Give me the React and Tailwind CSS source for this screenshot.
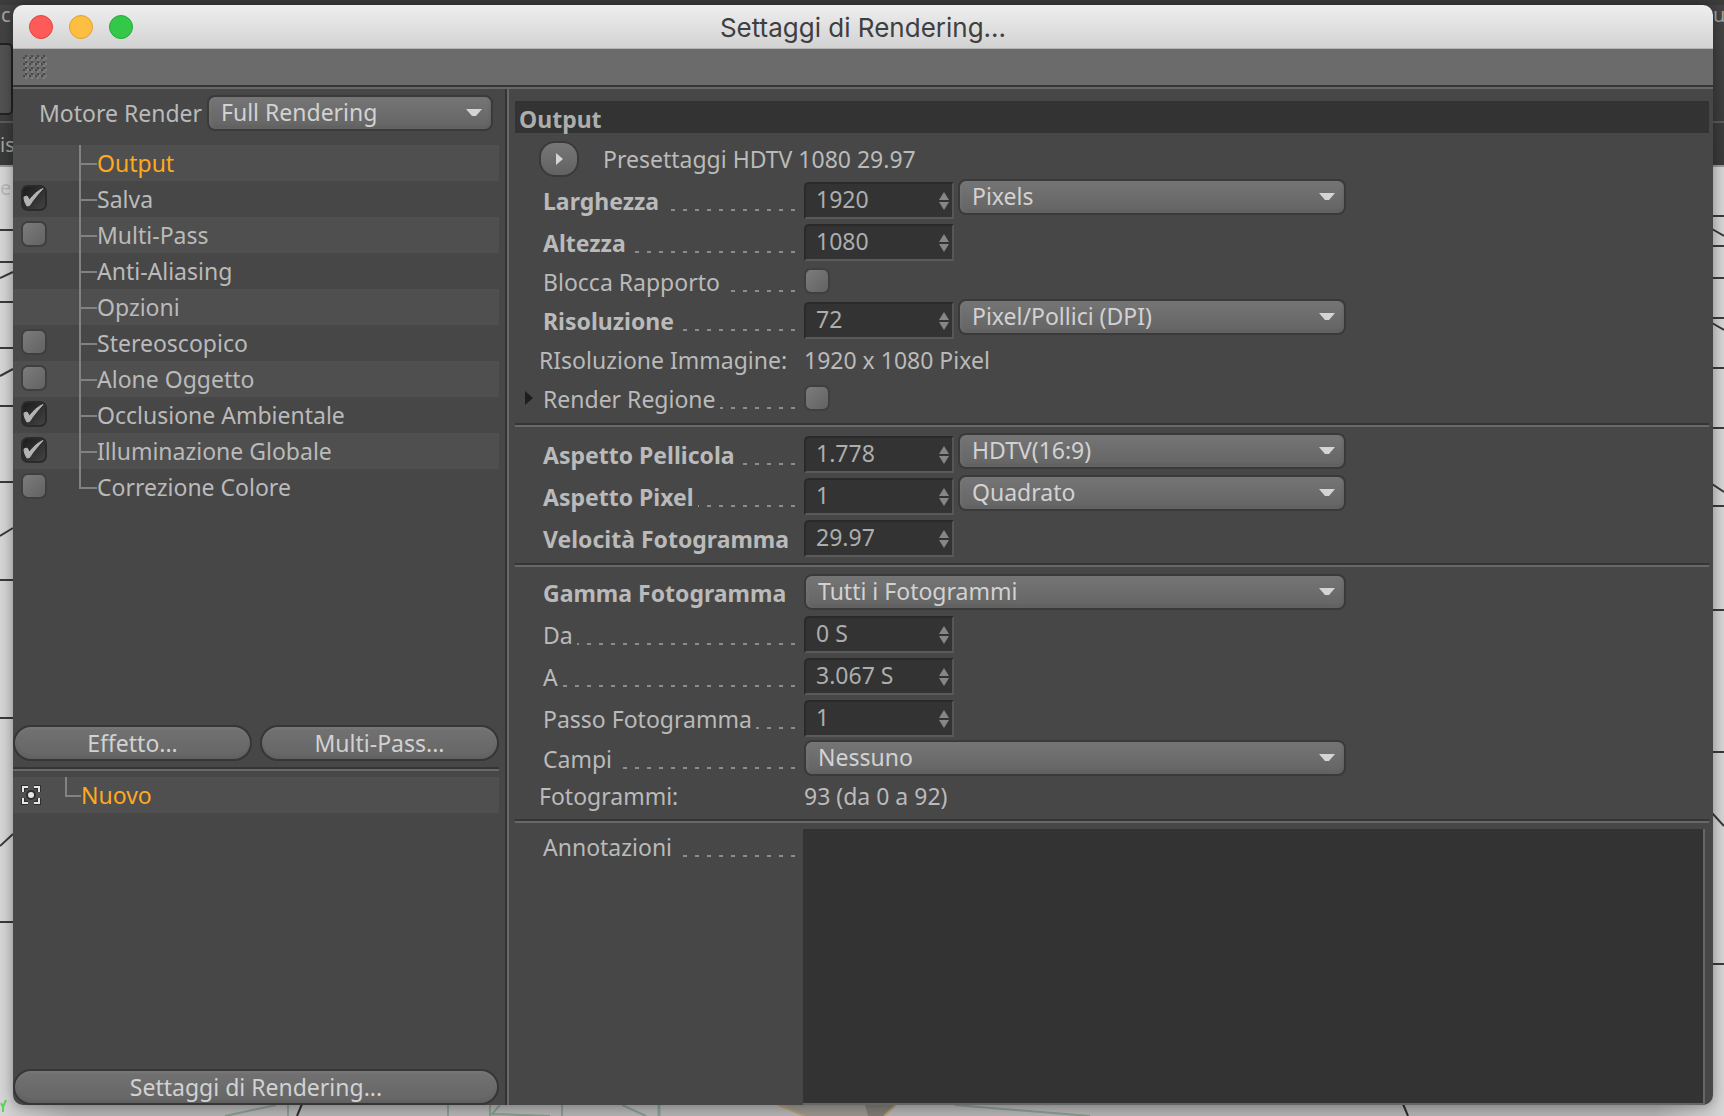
import React, { useState } from 'react';

const effects = [
  { name: 'Output', checkable: false },
  { name: 'Salva', checkable: true, on: true },
  { name: 'Multi-Pass', checkable: true, on: false },
  { name: 'Anti-Aliasing', checkable: false },
  { name: 'Opzioni', checkable: false },
  { name: 'Stereoscopico', checkable: true, on: false },
  { name: 'Alone Oggetto', checkable: true, on: false },
  { name: 'Occlusione Ambientale', checkable: true, on: true },
  { name: 'Illuminazione Globale', checkable: true, on: true },
  { name: 'Correzione Colore', checkable: true, on: false },
];

// 3D viewport and toolbars that stay visible behind the dialog
const Backdrop = () => (
  <svg className="absolute inset-0 w-full h-full" aria-hidden="true">
    <defs>
      <linearGradient id="bar" x1="0" y1="0" x2="0" y2="1">
        <stop offset="0" stopColor="#454545" />
        <stop offset="1" stopColor="#3a3a3a" />
      </linearGradient>
      <linearGradient id="floor" x1="0" y1="0" x2="1" y2="0">
        <stop offset="0" stopColor="#b0b0b0" stopOpacity="0" />
        <stop offset="0.04" stopColor="#b0b0b0" />
        <stop offset="0.96" stopColor="#b0b0b0" />
        <stop offset="1" stopColor="#b0b0b0" stopOpacity="0" />
      </linearGradient>
    </defs>
    <rect width="100%" height="100%" fill="#d6d6d6" />
    <rect width="100%" height="165" fill="url(#bar)" />
    <rect width="100%" height="5" fill="#3c3c3c" />
    <rect x="-20" y="44" width="32" height="70" rx="4" fill="#525252" stroke="#222" strokeWidth="2" />
    <rect y="121" width="100%" height="2" fill="#5c5c5c" />
    <rect y="165" width="100%" height="2" fill="#9a9a9a" />
    <text x="1" y="22" fontSize="20" fontFamily="Noto Sans" fill="#a6a6a6">c</text>
    <text x="0" y="152" fontSize="20" fontFamily="Noto Sans" fill="#a6a6a6">is</text>
    <text x="0" y="195" fontSize="20" fontFamily="Noto Sans" fill="#b8b8b8">e</text>
    <text x="1713" y="22" fontSize="20" fontFamily="Noto Sans" fill="#a6a6a6">u</text>
    <g stroke="#3a3a3a" strokeWidth="2" fill="none">
      <path d="M0 230H13M0 262H13M0 278L13 272M0 302H13M0 348H13M0 376L13 369M0 406H13M0 482H13M0 536L13 528M0 580H13M0 718H13M0 846L13 834M0 922H13" />
      <path d="M1712 216H1724M1712 229L1724 236M1712 246H1724M1712 278H1724M1712 318H1724M1712 323L1724 330M1712 368H1724M1712 428H1724M1712 484L1724 492M1712 506H1724M1712 610H1724M1712 752H1724M1712 813L1724 826M1712 964H1724" />
    </g>
    <rect y="1100" width="100%" height="16" fill="url(#floor)" />
    <g stroke="#84998c" strokeWidth="2" fill="none">
      <path d="M288 1104V1116M448 1104V1116M562 1104V1116M225 1116L276 1105M490 1104V1116M500 1105L492 1114L550 1116M622 1105L646 1116" />
      <path d="M659 1104V1116" strokeWidth="3" />
      <path d="M955 1105L1090 1116" />
    </g>
    <path d="M778 1104L805 1116H884L896 1104Z" fill="#97928b" />
    <path d="M865 1104L868 1116H884L896 1104Z" fill="#7d7972" />
    <path d="M778 1105L805 1116M896 1105L884 1116" stroke="#b09a70" strokeWidth="2" />
    <path d="M302 1104L297 1116M1403 1104L1408 1116" stroke="#2c2c2c" strokeWidth="2" />
    <path d="M1 1103L3 1107L6 1100M3 1107V1112" stroke="#5fd35f" strokeWidth="2" fill="none" />
  </svg>
);

const Checkbox = ({ id, label, defaultChecked = false }) => {
  const [checked, setChecked] = useState(defaultChecked);
  return (
    <span className="relative flex w-[26px] h-[26px] shrink-0">
      <input
        id={id}
        type="checkbox"
        aria-label={label}
        checked={checked}
        onChange={(e) => setChecked(e.target.checked)}
        className="appearance-none w-full h-full rounded-[7px] border-2 border-[#3f3f3f] bg-linear-to-br from-[#7c7c7c] to-[#626262] checked:border-[#2b2b2b] checked:from-[#1c1c1c] checked:to-[#444444]"
      />
      {checked && (
        <svg viewBox="0 0 26 26" className="absolute inset-0 w-full h-full pointer-events-none">
          <path d="M3 12L6 11L8.500 15C12 10 17 5.500 22 3.500C17 9 12 15 8.500 20.500L6 21C4 18 3 15 3 12Z" fill="#b4b4b4" stroke="#b4b4b4" strokeWidth="1" strokeLinejoin="round" />
        </svg>
      )}
    </span>
  );
};

const Select = ({ id, label, value, className }) => (
  <span className={`relative flex shrink-0 ${className}`}>
    <select
      id={id}
      aria-label={label}
      className="appearance-none w-full h-9 pl-3 pb-0.5 rounded-[8px] border-2 border-[#3a3a3a] bg-linear-to-b from-[#757575] to-[#646464] text-[#d2d2d2] leading-[30px] shadow-[inset_2px_0_3px_#7e7e7e66,inset_-1px_-2px_3px_#5555]"
    >
      <option>{value}</option>
    </select>
    <svg viewBox="0 0 16 8" className="absolute right-[11px] top-3.5 w-4 h-2 pointer-events-none">
      <path d="M0 0H16L10 7H6Z" fill="#d4d4d4" />
    </svg>
  </span>
);

const NumberField = ({ id, value }) => (
  <span className="relative flex w-[150px] shrink-0">
    <input
      id={id}
      type="text"
      defaultValue={value}
      className="w-full h-[37px] pl-2.5 pr-8 pb-0.5 rounded-tl-[5px] bg-[#333333] border-2 border-t-[#2a2a2a] border-l-[#2a2a2a] border-r-[#565656] border-b-[#5a5a5a] text-[#adadad]"
    />
    <svg viewBox="0 0 10 18" className="absolute right-[5px] top-2.5 w-2.5 h-[18px] pointer-events-none">
      <path d="M5 0L10 8H0ZM0 10H10L5 18Z" fill="#868686" />
    </svg>
  </span>
);

const Dots = () => (
  <span className="flex-1 h-0.5 ml-1 mb-2 self-end bg-[repeating-linear-gradient(to_left,#8c8c8c_0px,#8c8c8c_4px,transparent_4px,transparent_12px)]" />
);

const Row = ({ id, label, bold, dots = true, className = 'h-[42px]', children }) => (
  <div className={`flex items-center ${className}`}>
    <div className="flex w-[289px] shrink-0 pl-7 pt-0.5 pr-[9px]">
      <label htmlFor={id} className={bold ? 'font-bold whitespace-nowrap' : 'whitespace-nowrap'}>
        {label}
      </label>
      {dots && <Dots />}
    </div>
    {children}
  </div>
);

const Info = ({ label, value }) => (
  <div className="flex items-center h-[38px]">
    <span className="w-[289px] shrink-0 pl-6">{label}</span>
    <span>{value}</span>
  </div>
);

const Separator = () => <div className="h-1 shrink-0 border-t-2 border-b-2 border-t-[#353535] border-b-[#686868]" />;

const PillButton = ({ children }) => (
  <button
    type="button"
    className="flex-1 h-9 rounded-full border-2 border-[#363636] bg-linear-to-b from-[#727272] to-[#656565] text-[#d2d2d2] leading-8 shadow-[inset_0_2px_2px_#8080807a,inset_0_-2px_3px_#5555]"
  >
    {children}
  </button>
);

const Sidebar = () => {
  const [selected, setSelected] = useState('Output');

  return (
    <aside className="flex flex-col w-[492px] shrink-0 pr-1.5">
      <div className="flex items-center h-14 pl-[26px] pr-1.5 pb-2">
        <label htmlFor="engine" className="w-[168px] shrink-0">Motore Render</label>
        <Select id="engine" value="Full Rendering" className="flex-1" />
      </div>
      <ul>
        {effects.map((effect, i) => (
          <li key={effect.name} className="flex h-9 odd:bg-[#4f4f4f]">
            <span className="w-[66px] shrink-0 pl-2 pt-1">
              {effect.checkable && <Checkbox label={effect.name} defaultChecked={effect.on} />}
            </span>
            <span className="flex flex-col w-[18px] shrink-0">
              <span className="h-5 border-l-2 border-b-2 border-[#828282]" />
              {i < effects.length - 1 && <span className="flex-1 border-l-2 border-[#828282]" />}
            </span>
            <button
              type="button"
              onClick={() => setSelected(effect.name)}
              className={selected === effect.name ? 'text-left text-[#ffa91f]' : 'text-left'}
            >
              {effect.name}
            </button>
          </li>
        ))}
      </ul>
      <div className="flex gap-2 mt-auto pb-1.5">
        <PillButton>Effetto...</PillButton>
        <PillButton>Multi-Pass...</PillButton>
      </div>
      <Separator />
      <div className="flex flex-col h-[334px] pt-1.5">
        <div className="flex h-9 bg-[#4f4f4f]">
          <span className="w-[52px] pl-2 pt-2">
            <svg viewBox="0 0 20 20" className="w-5 h-5">
              <path d="M2 7V2H7M13 2H18V7M18 13V18H13M7 18H2V13" stroke="#2e2e2e" strokeWidth="4.500" fill="none" />
              <path d="M2 7V2H7M13 2H18V7M18 13V18H13M7 18H2V13" stroke="#e6e6e6" strokeWidth="2" fill="none" />
              <circle cx="10" cy="10" r="5" fill="#2e2e2e" />
              <circle cx="10" cy="10" r="3" fill="#e6e6e6" />
            </svg>
          </span>
          <span className="w-4 h-5 border-l-2 border-b-2 border-[#828282]" />
          <span className="leading-9 text-[#ffa91f]">Nuovo</span>
        </div>
        <div className="flex mt-auto">
          <PillButton>Settaggi di Rendering...</PillButton>
        </div>
      </div>
    </aside>
  );
};

const OutputPanel = () => (
  <main className="flex flex-col flex-1 min-w-0 pl-1.5 pr-1 pt-3">
    <h2 className="h-8 pl-1 leading-9 font-bold text-[#adadad] bg-[#333333]">Output</h2>
    <div className="flex flex-col pt-1.5 pb-1.5">
      <div className="flex items-center h-10 pl-6 gap-6">
        <button
          type="button"
          aria-label="Presettaggi"
          className="flex items-center justify-center w-10 h-9 rounded-[16px] border-2 border-[#3a3a3a] bg-linear-to-b from-[#777777] to-[#626262]"
        >
          <svg viewBox="0 0 8 12" className="w-2 h-3">
            <path d="M1 0L8 6L1 12Z" fill="#d6d6d6" />
          </svg>
        </button>
        <span>Presettaggi HDTV 1080 29.97</span>
      </div>
      <Row id="width" label="Larghezza" bold>
        <NumberField id="width" value="1920" />
        <Select label="Unità" value="Pixels" className="w-[388px] ml-1 self-start" />
      </Row>
      <Row id="height" label="Altezza" bold>
        <NumberField id="height" value="1080" />
      </Row>
      <Row id="lock" label="Blocca Rapporto" className="h-9">
        <Checkbox id="lock" />
      </Row>
      <Row id="resolution" label="Risoluzione" bold>
        <NumberField id="resolution" value="72" />
        <Select label="Unità risoluzione" value="Pixel/Pollici (DPI)" className="w-[388px] ml-1 self-start" />
      </Row>
      <Info label="RIsoluzione Immagine:" value="1920 x 1080 Pixel" />
      <div className="relative">
        <svg viewBox="0 0 8 14" className="absolute left-2.5 top-3 w-2 h-3.5">
          <path d="M0 0L8 7L0 14Z" fill="#1e1e1e" />
        </svg>
        <Row id="region" label="Render Regione" className="h-[38px]">
          <Checkbox id="region" />
        </Row>
      </div>
    </div>
    <Separator />
    <div className="flex flex-col pt-1.5 pb-1">
      <Row id="film" label="Aspetto Pellicola" bold>
        <NumberField id="film" value="1.778" />
        <Select label="Formato pellicola" value="HDTV(16:9)" className="w-[388px] ml-1 self-start" />
      </Row>
      <Row id="pixel" label="Aspetto Pixel" bold>
        <NumberField id="pixel" value="1" />
        <Select label="Formato pixel" value="Quadrato" className="w-[388px] ml-1 self-start" />
      </Row>
      <Row id="fps" label="Velocità Fotogramma" bold dots={false}>
        <NumberField id="fps" value="29.97" />
      </Row>
    </div>
    <Separator />
    <div className="flex flex-col py-1">
      <Row id="range" label="Gamma Fotogramma" bold dots={false}>
        <Select id="range" value="Tutti i Fotogrammi" className="w-[542px]" />
      </Row>
      <Row id="from" label="Da">
        <NumberField id="from" value="0 S" />
      </Row>
      <Row id="to" label="A">
        <NumberField id="to" value="3.067 S" />
      </Row>
      <Row id="step" label="Passo Fotogramma">
        <NumberField id="step" value="1" />
      </Row>
      <Row id="fields" label="Campi" className="h-[38px]">
        <Select id="fields" value="Nessuno" className="w-[542px]" />
      </Row>
      <Info label="Fotogrammi:" value="93 (da 0 a 92)" />
    </div>
    <Separator />
    <div className="flex flex-1 pt-1.5 pr-1">
      <div className="flex w-72 h-9 shrink-0 pl-7 pr-2">
        <label htmlFor="notes" className="leading-9">Annotazioni</label>
        <Dots />
      </div>
      <textarea
        id="notes"
        className="flex-1 resize-none bg-[#333333] border-r-2 border-b-2 border-[#666666] outline-none"
      />
    </div>
  </main>
);

export default function App() {
  return (
    <div className="relative flex min-h-screen overflow-hidden pt-[5px] pb-[11px] pl-[13px] pr-[11px] font-['Noto_Sans',sans-serif] text-[23px] leading-9 text-[#bababa]">
      <Backdrop />
      <div className="relative flex flex-col flex-1 min-w-0 overflow-hidden rounded-[10px] bg-[#474747] shadow-[0_0_14px_#0006]">
        <header className="grid grid-cols-[1fr_auto_1fr] items-center h-11 px-4 bg-linear-to-b from-[#efefef] to-[#d2d2d2] border-b border-[#b4b4b4]">
          <div className="flex gap-4">
            <button type="button" aria-label="Chiudi" className="w-6 h-6 rounded-full bg-[#fc5b57] border border-[#e2443f]" />
            <button type="button" aria-label="Riduci" className="w-6 h-6 rounded-full bg-[#fdbe41] border border-[#dfa033]" />
            <button type="button" aria-label="Ingrandisci" className="w-6 h-6 rounded-full bg-[#34c84a] border border-[#24aa35]" />
          </div>
          <h1 className="pt-0.5 font-['Inter',sans-serif] text-[26px] text-[#3f3f3f]">Settaggi di Rendering...</h1>
        </header>
        <div className="flex items-center h-9 px-2.5 bg-[#6b6b6b]">
          <svg className="w-6 h-6" aria-hidden="true">
            <defs>
              <pattern id="grip" width="6" height="6" patternUnits="userSpaceOnUse">
                <path d="M0 2H2V0H4V2H2V4H0Z" fill="#484848" />
                <path d="M2 4H4V2H6V4H4V6H2Z" fill="#808080" />
              </pattern>
            </defs>
            <rect width="24" height="24" fill="url(#grip)" />
          </svg>
        </div>
        <Separator />
        <div className="flex flex-1">
          <Sidebar />
          <div className="w-1 shrink-0 border-l-2 border-r-2 border-l-[#333333] border-r-[#686868]" />
          <OutputPanel />
        </div>
      </div>
    </div>
  );
}
